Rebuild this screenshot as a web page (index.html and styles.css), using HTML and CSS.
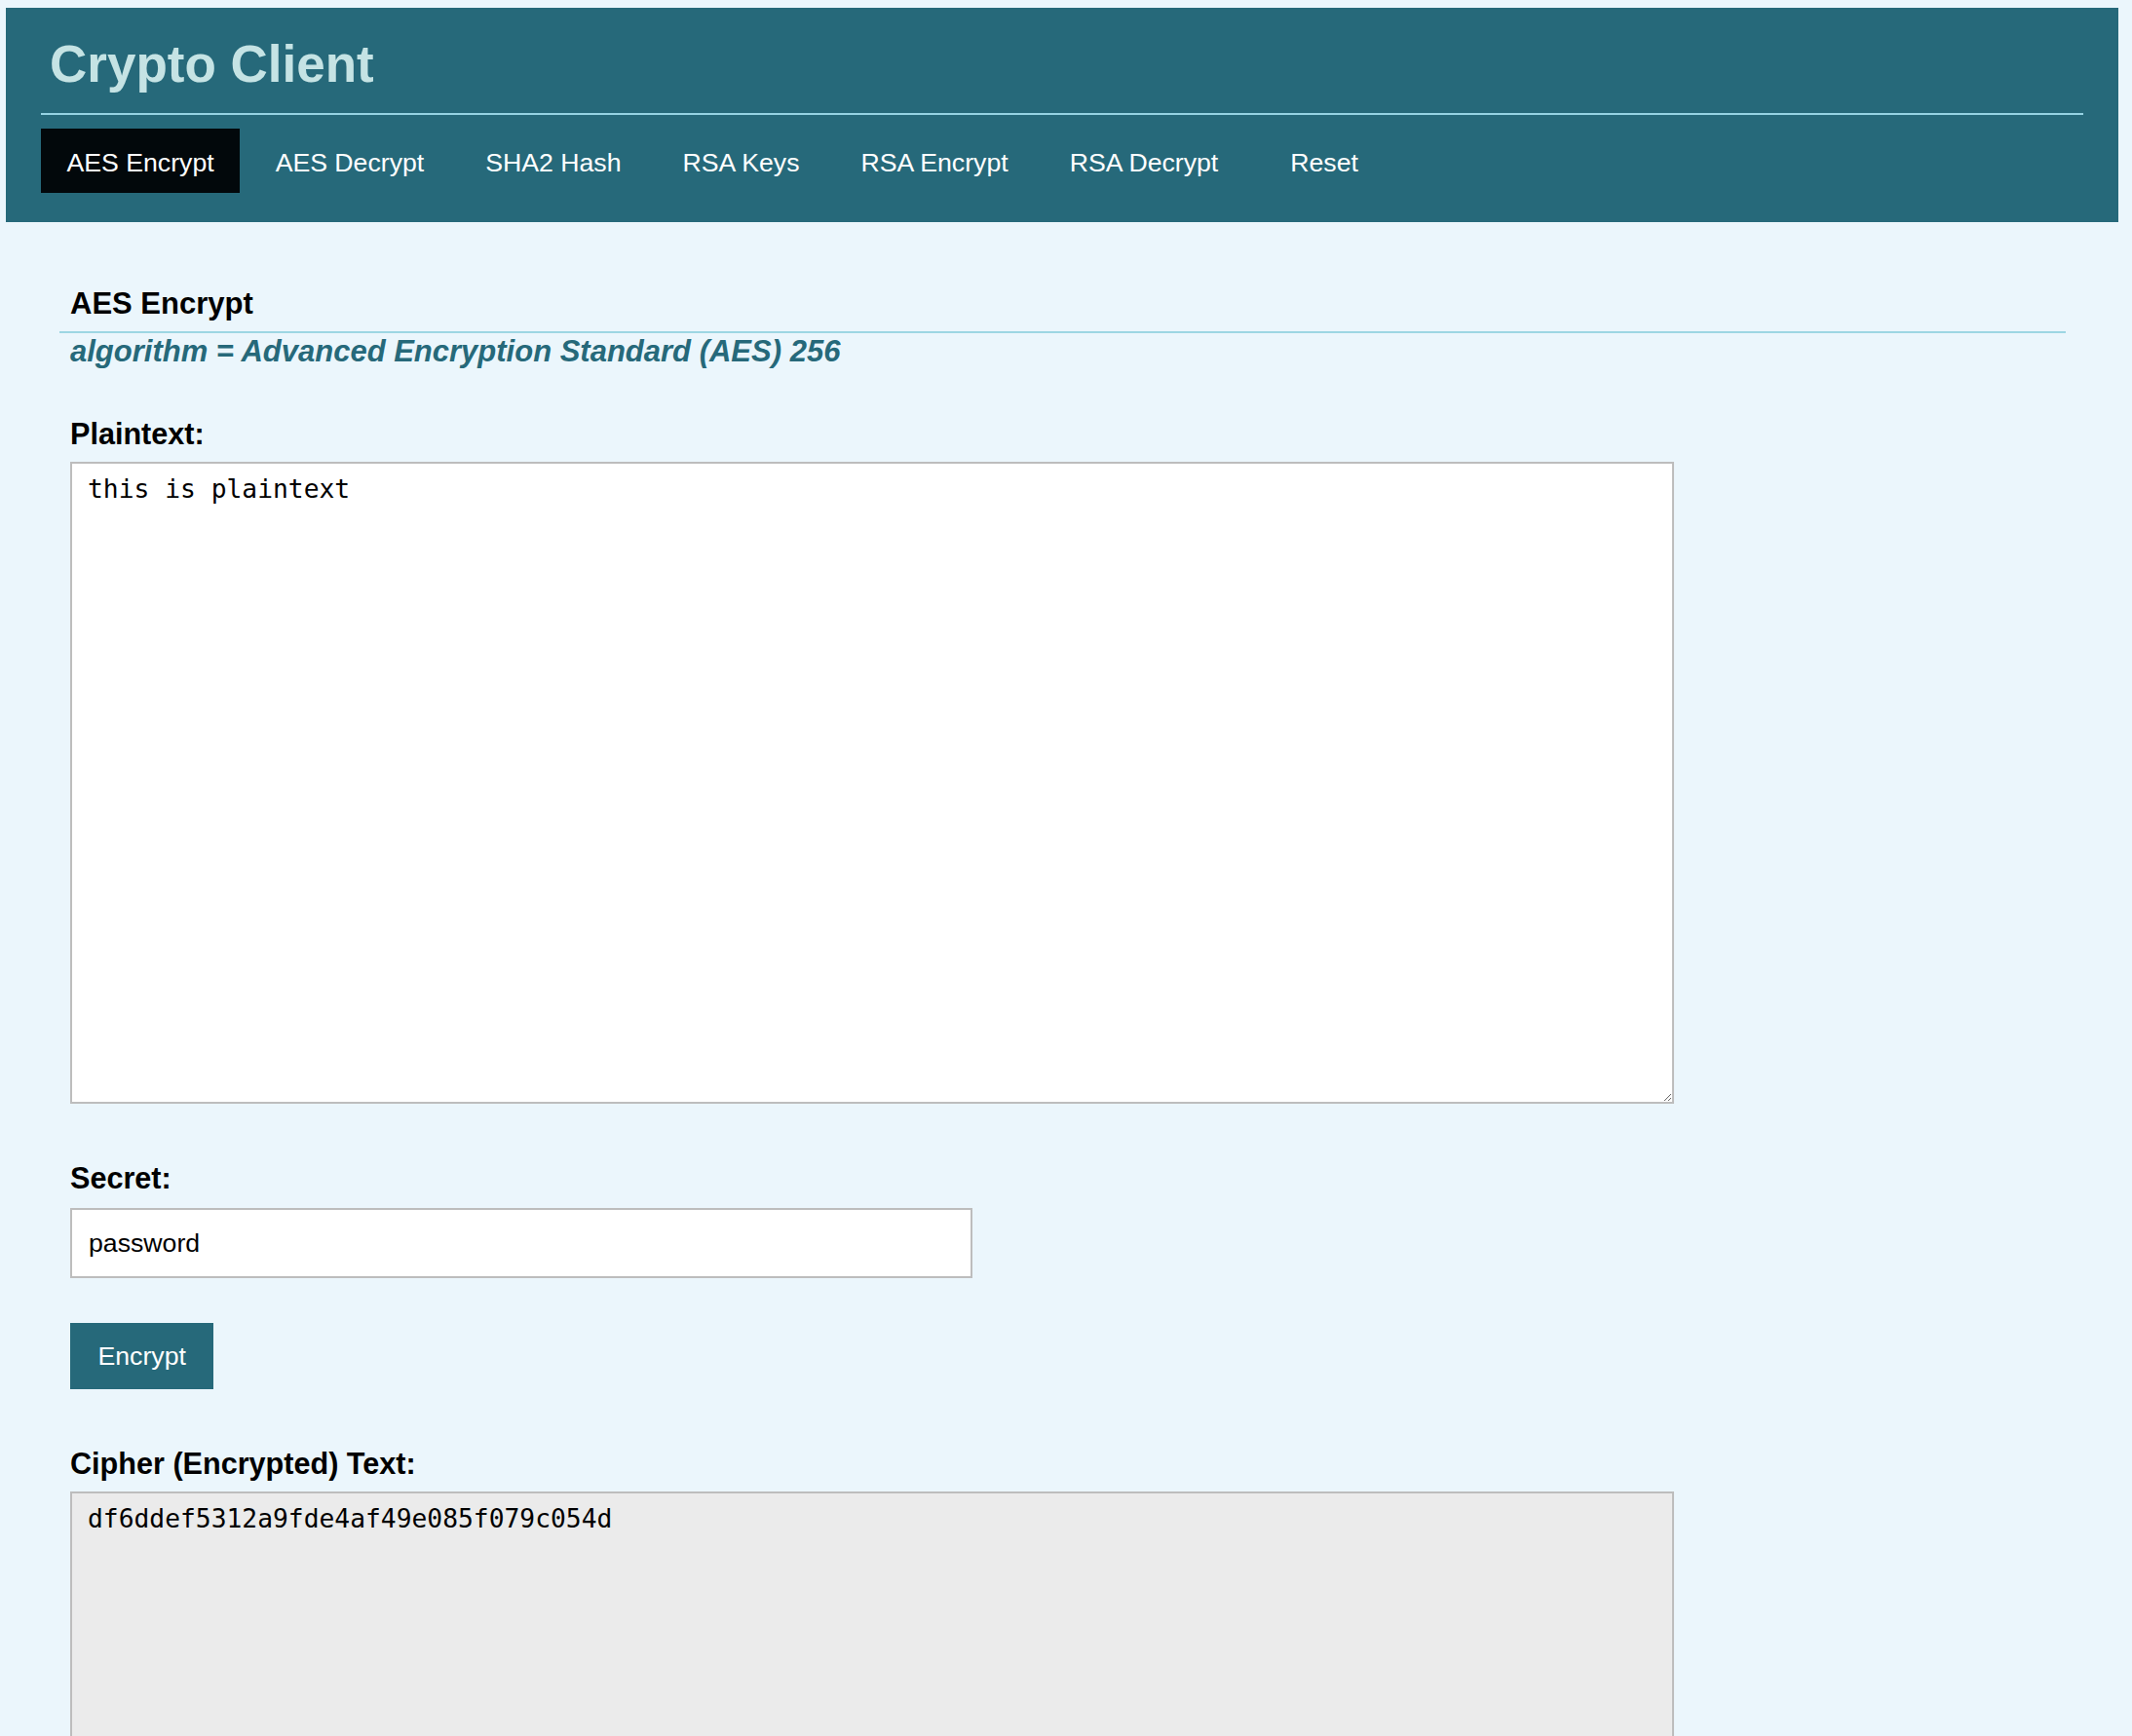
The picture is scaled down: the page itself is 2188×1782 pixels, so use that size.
FILE: index.html
```html
<!DOCTYPE html>
<html lang="en">
<head>
<meta charset="utf-8">
<title>Crypto Client</title>
<link rel="stylesheet" href="styles.css">
</head>
<body>
<div class="page">
  <header class="topbar">
    <h1 class="brand">Crypto Client</h1>
    <nav class="tabs">
      <a class="tab active" href="#">AES Encrypt</a>
      <a class="tab" href="#">AES Decrypt</a>
      <a class="tab" href="#">SHA2 Hash</a>
      <a class="tab" href="#">RSA Keys</a>
      <a class="tab" href="#">RSA Encrypt</a>
      <a class="tab" href="#">RSA Decrypt</a>
      <a class="tab reset" href="#">Reset</a>
    </nav>
  </header>
  <main class="panel">
    <h2 class="panel-title">AES Encrypt</h2>
    <p class="algo">algorithm = Advanced Encryption Standard (AES) 256</p>
    <form class="form">
      <label class="field-label first" for="plaintext">Plaintext:</label>
      <textarea id="plaintext" class="text-box">this is plaintext</textarea>
      <label class="field-label secret-label" for="secret">Secret:</label>
      <input id="secret" class="secret" type="text" value="password">
      <button class="btn" type="button">Encrypt</button>
      <label class="field-label cipher-label" for="cipher">Cipher (Encrypted) Text:</label>
      <textarea id="cipher" class="text-box readonly" readonly>df6ddef5312a9fde4af49e085f079c054d</textarea>
    </form>
  </main>
</div>
</body>
</html>
```

FILE: styles.css
```css
html, body {
  margin: 0;
  padding: 0;
  background: #ebf6fc;
}

.page {
  padding: 8px 14px 0 6px;
  font-family: "Liberation Sans", Arial, sans-serif;
  color: #000;
}

.topbar {
  background: #26697a;
  padding: 28px 36px 30px 36px;
}

.brand {
  margin: 0;
  padding: 0 0 20px 9px;
  font-size: 53px;
  line-height: 60px;
  font-weight: bold;
  color: #c5e3e4;
  border-bottom: 2px solid #96d3e3;
}

.tabs {
  display: flex;
  gap: 10px;
  margin-top: 14px;
}

.tab {
  display: block;
  padding: 20px 26.5px 16px;
  font-size: 26.67px;
  line-height: 30px;
  color: #ffffff;
  text-decoration: none;
}

.tab.active {
  background: #02080b;
}

.tab.reset {
  margin-left: 11px;
}

.panel {
  margin: 66px 54px 0 55px;
}

.panel-title {
  margin: 0;
  padding: 0 11px 10px;
  font-size: 31px;
  line-height: 36px;
  font-weight: bold;
  border-bottom: 2px solid #9dd6e3;
}

.algo {
  margin: 1px 0 0;
  padding: 0 11px;
  font-size: 31px;
  line-height: 36px;
  font-weight: bold;
  font-style: italic;
  color: #26697a;
}

.form {
  display: flex;
  flex-direction: column;
  align-items: flex-start;
  padding: 0 11px;
}

.field-label {
  display: block;
  font-size: 30.6px;
  line-height: 36px;
  font-weight: bold;
  margin-bottom: 11px;
}

.field-label.first {
  margin-top: 48px;
}

.field-label.secret-label {
  margin-top: 58px;
  margin-bottom: 13px;
}

.field-label.cipher-label {
  margin-top: 58px;
}

.text-box {
  box-sizing: border-box;
  width: 1646px;
  height: 659px;
  margin: 0;
  padding: 11px 16px;
  border: 2px solid #bdbdbd;
  border-radius: 0;
  background: #ffffff;
  color: #000;
  font-family: "DejaVu Sans Mono", "Liberation Mono", monospace;
  font-size: 26.3px;
  line-height: normal;
  outline: none;
}

.text-box.readonly {
  background: #ebebeb;
}

.secret {
  box-sizing: border-box;
  width: 926px;
  height: 72px;
  margin: 0;
  padding: 0 17px;
  border: 2px solid #bdbdbd;
  border-radius: 0;
  background: #ffffff;
  color: #000;
  font-family: "Liberation Sans", Arial, sans-serif;
  font-size: 26.67px;
  outline: none;
}

.btn {
  margin-top: 46px;
  height: 68px;
  padding: 0 28.5px;
  border: 0;
  border-radius: 0;
  background: #26697a;
  color: #ffffff;
  font-family: "Liberation Sans", Arial, sans-serif;
  font-size: 26.67px;
  cursor: pointer;
}
```
